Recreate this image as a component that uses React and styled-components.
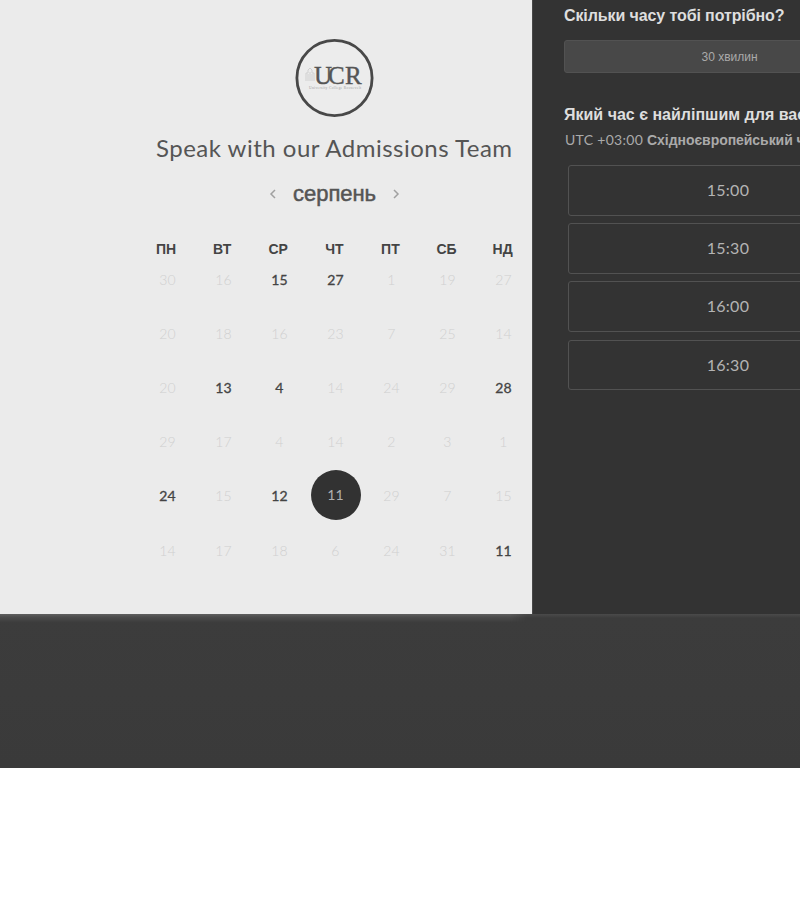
import React from "react";
import styled, { createGlobalStyle, css } from "styled-components";

const Global = createGlobalStyle`
  * { box-sizing: border-box; }
  html, body { margin: 0; background: #fff; overflow: hidden; }
`;

const Page = styled.div`
  width: 800px;
  height: 900px;
  overflow: hidden;
  background: #fff;
  font-family: Lato, "Liberation Sans", sans-serif;
`;

const Scheduler = styled.main`
  display: flex;
  height: 614px;
`;

const CalendarPanel = styled.section`
  flex: none;
  width: 532px;
  padding: 38px 0 0 140px;
  background: #ebebeb;
`;

const Logo = styled.svg`
  display: block;
  width: 80px;
  height: 80px;
  margin-left: 154px;
`;

const Title = styled.h1`
  margin: 14px 0 0;
  padding-left: 16px;
  color: #555;
  font-size: 24px;
  font-weight: 400;
  line-height: 32px;
  letter-spacing: 0.49px;
  white-space: nowrap;
`;

const MonthBar = styled.div`
  display: flex;
  align-items: center;
  height: 32px;
  margin-top: 14px;
  padding-left: 129px;
`;

const Month = styled.h2`
  width: 84px;
  margin: 0 16px;
  color: #555;
  font: 400 22px/32px "Liberation Sans", sans-serif;
  letter-spacing: -0.03px;
  -webkit-text-stroke: 0.5px #555;
  white-space: nowrap;
`;

const Arrow = styled.svg`
  width: 8px;
  height: 10px;
  margin-bottom: 1px;
  fill: none;
  stroke: #a0a0a0;
  stroke-width: 1.5;
`;

const Weekdays = styled.div`
  display: grid;
  grid-template-columns: repeat(7, 56.1px);
  margin: 29px 0 0 -2px;
  color: #444;
  font: 700 14px/20px "Liberation Sans", sans-serif;
  text-align: center;
`;

const Days = styled.div`
  display: grid;
  grid-template-columns: repeat(7, 56px);
  grid-auto-rows: 54.2px;
  margin: -7px 0 0 -0.5px;
`;

const Day = styled.div`
  display: flex;
  align-items: center;
  justify-content: center;
  color: ${(p) => (p.$open ? "#444" : "#d0d0d0")};
  font-size: 14px;
  font-weight: ${(p) => (p.$open ? 400 : 300)};
  letter-spacing: 0.2px;
  ${(p) => p.$open && css`-webkit-text-stroke: 0.3px #444;`}
`;

const Selected = styled.span`
  display: flex;
  flex: none;
  align-items: center;
  justify-content: center;
  width: 50px;
  height: 50px;
  margin-top: -1px;
  padding-bottom: 2px;
  border-radius: 50%;
  background: #323232;
  color: #b0b0b0;
  font-weight: 400;
`;

const TimePanel = styled.section`
  flex: none;
  width: 360px;
  padding: 6px 0 0 31px;
  border-left: 1px solid #484848;
  background: #333;
`;

const Question = styled.h3`
  margin: 0;
  color: #dedede;
  font: 700 16px/20px "Liberation Sans", sans-serif;
  letter-spacing: ${(p) => p.$spacing || 0};
  white-space: nowrap;
`;

const Duration = styled.button`
  display: block;
  width: 331px;
  height: 33px;
  margin: 14px 0 32px;
  padding: 0;
  border: 1px solid #525252;
  border-radius: 3px;
  background: #484848;
  color: #aaa;
  font: 400 12px/30px "Liberation Sans", sans-serif;
`;

const Zone = styled.div`
  margin: 5px 0 0 1px;
  color: #aaa;
  font: 400 14px/20px Lato, sans-serif;
  letter-spacing: 0.3px;
  white-space: nowrap;

  b {
    font: 700 14px/20px "Liberation Sans", sans-serif;
    letter-spacing: -0.05px;
  }
`;

const Slots = styled.div`
  display: grid;
  grid-auto-rows: 50.5px;
  gap: 7.7px;
  width: 320px;
  margin: 15px 0 0 4px;
`;

const Slot = styled.button`
  padding: 0 0 0.6px;
  border: 1px solid #525252;
  border-radius: 3px;
  background: #333;
  color: #b4b4b4;
  font: 400 16px/20px Lato, sans-serif;
  letter-spacing: 0.25px;
`;

const Footer = styled.footer`
  height: 154px;
  background: linear-gradient(#4a4a4a, #3c3c3c 4px, #3a3a3a);
`;

const FooterGlow = styled.div`
  width: 528px;
  height: 9px;
  background: linear-gradient(#606060, #4c4c4c 3px, #3b3b3b);
  mask-image: linear-gradient(to right, #000 510px, transparent);
`;

const LogoText = styled.text`
  font-family: "Liberation Serif", serif;
  font-size: ${(p) => p.$size}px;
  fill: ${(p) => p.$color};
`;

const weekdays = ["ПН", "ВТ", "СР", "ЧТ", "ПТ", "СБ", "НД"];
const days = [
  [30, 16, 15, 27, 1, 19, 27],
  [20, 18, 16, 23, 7, 25, 14],
  [20, 13, 4, 14, 24, 29, 28],
  [29, 17, 4, 14, 2, 3, 1],
  [24, 15, 12, 11, 29, 7, 15],
  [14, 17, 18, 6, 24, 31, 11],
].flat();
const open = new Set([2, 3, 15, 16, 20, 28, 30, 41]);
const selected = 31;

export default function App() {
  return (
    <Page>
      <Global />
      <Scheduler>
        <CalendarPanel>
          <Logo viewBox="0 0 80 80">
            <circle cx="40.5" cy="40" r="37.6" fill="#ececec" stroke="#484848" strokeWidth="2.8" />
            <path d="M12 43V35H14V32L16 30L18 32V35H20V43M14 36V43M16 34V43M18 36V43" fill="none" stroke="#d0d0d0" strokeWidth="1" />
            <g stroke="#555" strokeWidth="0.4">
              <LogoText x="20" y="45.5" $size="25" $color="#555">U</LogoText>
              <LogoText x="34" y="45.5" $size="25" $color="#555">C</LogoText>
              <LogoText x="51" y="45.5" $size="25" $color="#555">R</LogoText>
            </g>
            <LogoText x="15" y="51" $size="3.6" $color="#a0a0a0" textLength="52">University College Roosevelt</LogoText>
          </Logo>
          <Title>Speak with our Admissions Team</Title>
          <MonthBar>
            <Arrow viewBox="0 0 8 10"><path d="M6 1 2 5l4 4" /></Arrow>
            <Month>серпень</Month>
            <Arrow viewBox="0 0 8 10"><path d="m1 1 4 4-4 4" /></Arrow>
          </MonthBar>
          <Weekdays>{weekdays.map((d) => <span key={d}>{d}</span>)}</Weekdays>
          <Days>
            {days.map((d, i) => (
              <Day key={i} $open={open.has(i)}>
                {i === selected ? <Selected>{d}</Selected> : d}
              </Day>
            ))}
          </Days>
        </CalendarPanel>
        <TimePanel>
          <Question $spacing="-0.1px">Скільки часу тобі потрібно?</Question>
          <Duration>30 хвилин</Duration>
          <Question>Який час є найліпшим для вас?</Question>
          <Zone>UTC +03:00 <b>Східноєвропейський час</b></Zone>
          <Slots>
            {["15:00", "15:30", "16:00", "16:30"].map((t) => <Slot key={t}>{t}</Slot>)}
          </Slots>
        </TimePanel>
      </Scheduler>
      <Footer><FooterGlow /></Footer>
    </Page>
  );
}
